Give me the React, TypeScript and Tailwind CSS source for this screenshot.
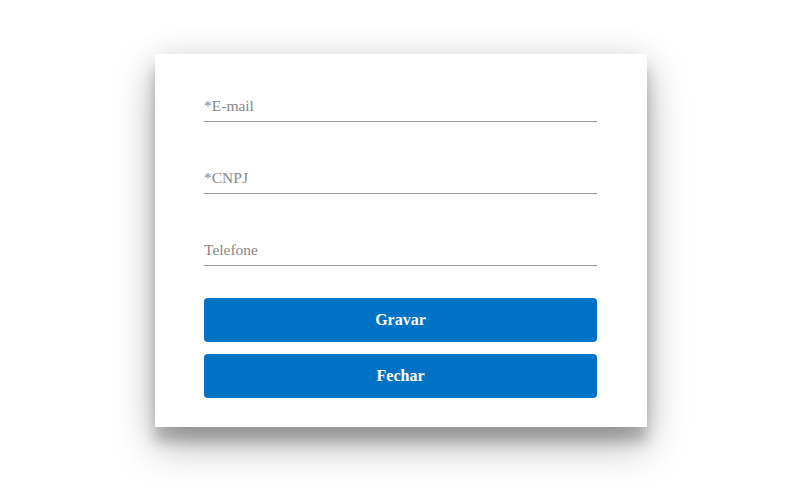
export default function App() {
  const fields = ['*E-mail', '*CNPJ', 'Telefone']

  return (
    <div className="flex h-[495px] w-full justify-center bg-white pl-[2px] pt-[54px] font-['Liberation_Serif',serif]">
      <div className="flex h-fit w-[492px] flex-col bg-white pl-[49px] pr-[50px] pt-[36px] pb-[29px] shadow-[0_19px_38px_rgba(0,0,0,0.28),0_15px_12px_rgba(0,0,0,0.2),0_0_30px_rgba(0,0,0,0.08)]">
        <div className="flex flex-col gap-[40px]">
          {fields.map((f) => (
            <input
              key={f}
              placeholder={f}
              className="h-[32px] w-full border-b border-[#9a9a9a] bg-transparent p-0 text-[15.5px] text-[#555] outline-none placeholder:text-[#888]"
            />
          ))}
        </div>
        <div className="mt-[32px] flex flex-col gap-[12px]">
          <button className="h-[44px] w-full rounded-[4px] bg-[#0072c6] text-[16px] font-bold text-white">
            Gravar
          </button>
          <button className="h-[44px] w-full rounded-[4px] bg-[#0072c6] text-[16px] font-bold text-white">
            Fechar
          </button>
        </div>
      </div>
    </div>
  )
}
